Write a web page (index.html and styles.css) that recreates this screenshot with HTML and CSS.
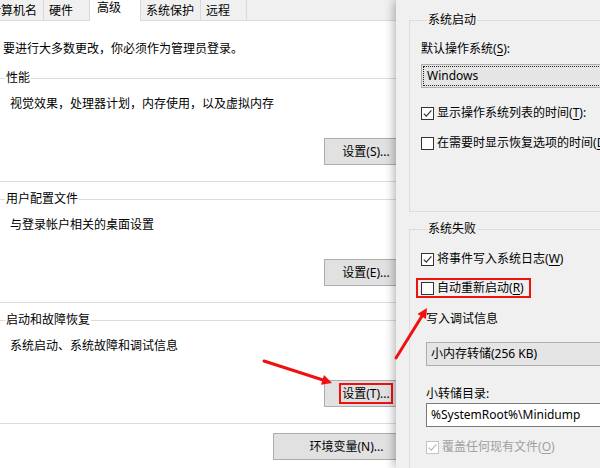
FILE: index.html
```html
<!DOCTYPE html>
<html lang="zh-CN">
<head>
  <meta charset="UTF-8">
  <title>系统属性 - 启动和故障恢复</title>
  <link rel="stylesheet" href="styles.css">
</head>
<body>
<div class="screen">

  <!-- 系统属性窗口（被右侧对话框遮住一部分） -->
  <div class="syswin">
    <div class="tabs">
      <div class="tab">计算机名</div>
      <div class="tab">硬件</div>
      <div class="tab active">高级</div>
      <div class="tab">系统保护</div>
      <div class="tab">远程</div>
    </div>
    <div class="sysbody">
      <p class="note">要进行大多数更改，你必须作为管理员登录。</p>

      <fieldset class="group">
        <legend>性能</legend>
        <p class="desc">视觉效果，处理器计划，内存使用，以及虚拟内存</p>
        <div class="actions"><button class="btn">设置(S)...</button></div>
      </fieldset>

      <fieldset class="group">
        <legend>用户配置文件</legend>
        <p class="desc">与登录帐户相关的桌面设置</p>
        <div class="actions"><button class="btn">设置(E)...</button></div>
      </fieldset>

      <fieldset class="group">
        <legend>启动和故障恢复</legend>
        <p class="desc">系统启动、系统故障和调试信息</p>
        <div class="actions"><button class="btn"><span class="mark">设置(T)...</span></button></div>
      </fieldset>

      <div class="actions env"><button class="btn wide">环境变量(N)...</button></div>
    </div>
  </div>

  <!-- 启动和故障恢复对话框 -->
  <div class="bootwin">
    <fieldset class="box-group first">
      <legend>系统启动</legend>
      <div class="label gap-13">默认操作系统<span class="key">(<u>S</u>)</span>:</div>
      <div class="select gap-7"><span class="focus">Windows</span></div>
      <label class="check gap-17">
        <span class="cb on"><svg viewBox="0 0 11 11"><path d="M1.8 5.6 L4.3 8.2 L9.4 2.4"/></svg></span>
        <span>显示操作系统列表的时间<span class="key">(<u>T</u>)</span>:</span>
      </label>
      <label class="check gap-14">
        <span class="cb"></span>
        <span>在需要时显示恢复选项的时间<span class="key">(<u>D</u>)</span>:</span>
      </label>
    </fieldset>

    <fieldset class="box-group second">
      <legend>系统失败</legend>
      <label class="check gap-14">
        <span class="cb on"><svg viewBox="0 0 11 11"><path d="M1.8 5.6 L4.3 8.2 L9.4 2.4"/></svg></span>
        <span>将事件写入系统日志<span class="key">(<u>W</u>)</span></span>
      </label>
      <label class="check gap-13 marked">
        <span class="cb"></span>
        <span>自动重新启动<span class="key">(<u>R</u>)</span></span>
      </label>

      <div class="sub">
        <div class="label gap-15">写入调试信息</div>
        <div class="select plain gap-15">小内存转储(256 KB)</div>
        <div class="label gap-20">小转储目录:</div>
        <div class="textbox gap-1">%SystemRoot%\Minidump</div>
        <label class="check disabled gap-12">
          <span class="cb on"><svg viewBox="0 0 11 11"><path d="M1.8 5.6 L4.3 8.2 L9.4 2.4"/></svg></span>
          <span>覆盖任何现有文件<span class="key">(<u>O</u>)</span></span>
        </label>
      </div>
    </fieldset>
  </div>

  <!-- 标注箭头 -->
  <svg class="arrows" viewBox="0 0 600 468">
    <line x1="264" y1="361" x2="323" y2="380"/>
    <polygon points="332,383 321,384.7 324,375.1"/>
    <line x1="396" y1="358" x2="421.7" y2="316.5"/>
    <polygon points="427,308 426,319.1 417.5,313.9"/>
  </svg>

</div>
</body>
</html>
```

FILE: styles.css
```css
* {
  box-sizing: border-box;
}

body {
  margin: 0;
  font-family: "Noto Sans", "Noto Sans CJK SC", sans-serif;
  font-size: 12px;
  line-height: 16px;
  color: #000;
  background: #fff;
  text-autospace: no-autospace;
}

.screen {
  position: relative;
  display: flex;
  width: 600px;
  height: 468px;
  overflow: hidden;
}

/* 左侧：系统属性 */
.syswin {
  flex: none;
  width: 396px;
  overflow: hidden;
  background: #fff;
}

.tabs {
  display: flex;
  align-items: flex-start;
  width: 430px;
  height: 21px;
  margin-left: -16px;
  background: #f0f0f0;
  border-bottom: 1px solid #d9d9d9;
}

.tab {
  flex: none;
  min-width: 46px;
  height: 20px;
  padding: 0 6px 0 5px;
  line-height: 22px;
  border-right: 1px solid #d9d9d9;
  white-space: nowrap;
}

.tab.active {
  position: relative;
  z-index: 1;
  min-width: 51px;
  height: 21px;
  padding: 0 8px 0 7px;
  line-height: 16px;
  background: #fff;
}

.sysbody {
  width: 420px;
  padding-top: 20px;
}

.note {
  margin: 0 0 13px 3px;
}

.group {
  min-width: 0;
  width: 424px;
  margin: 0 0 9px -4px;
  padding: 0 11px 16px 0;
  border: 1px solid #dcdcdc;
}

.group legend {
  margin-left: 8px;
  padding: 0 1px;
}

.desc {
  margin: 10px 0 0 13px;
}

.actions {
  display: flex;
  justify-content: flex-end;
  margin-top: 26px;
}

.actions.env {
  margin-top: 7px;
}

.btn {
  width: 84px;
  height: 27px;
  padding: 0;
  font: inherit;
  color: #000;
  background: #e1e1e1;
  border: 1px solid #adadad;
}

.btn.wide {
  width: 147px;
}

.mark {
  display: inline-block;
  padding: 0 1px;
  line-height: 17px;
  outline: 2px solid #f01010;
}

/* 右侧：启动和故障恢复 */
.bootwin {
  position: relative;
  z-index: 2;
  flex: 1;
  overflow: hidden;
  padding: 12px 0 0 13px;
  background: #f0f0f0;
  box-shadow: -2px 0 9px rgba(0, 0, 0, 0.3);
}

.box-group {
  min-width: 0;
  width: 260px;
  margin: 0;
  padding: 0 0 60px 11px;
  border: 1px solid #dcdcdc;
}

.box-group.second {
  margin-top: 9px;
  padding-bottom: 40px;
}

.box-group legend {
  margin-left: 6px;
  padding: 0 1px;
}

.label,
.check {
  white-space: nowrap;
}

.key {
  font-family: "Noto Sans", sans-serif;
}

.key u {
  text-underline-offset: 2px;
}

.select {
  width: 240px;
  height: 24px;
  background: #e5e5e5;
  border: 1px solid #adadad;
}

.select .focus {
  display: block;
  height: 20px;
  margin: 1px;
  padding-left: 3px;
  line-height: 18px;
  border: 1px dotted #222;
}

.select.plain {
  padding-left: 4px;
  line-height: 22px;
}

.textbox {
  width: 240px;
  height: 24px;
  padding-left: 4px;
  line-height: 22px;
  background: #fff;
  border: 1px solid #7a7a7a;
  white-space: nowrap;
}

.check {
  display: flex;
  align-items: center;
  gap: 3px;
  height: 16px;
}

.cb {
  flex: none;
  width: 13px;
  height: 13px;
  background: #fff;
  border: 1px solid #333;
}

.cb svg {
  display: block;
  width: 11px;
  height: 11px;
}

.cb path {
  fill: none;
  stroke: #333;
  stroke-width: 1.2;
}

.check.marked {
  width: max-content;
  margin-left: -3px;
  margin-right: -5px;
  padding: 0 5px 0 3px;
  outline: 2px solid #f01010;
}

.check.disabled {
  color: #a0a0a0;
}

.check.disabled .cb {
  border-color: #c4c4c4;
}

.check.disabled path {
  stroke: #b8b8b8;
}

.sub {
  margin-left: 5px;
}

.gap-1 { margin-top: 1px; }
.gap-7 { margin-top: 7px; }
.gap-12 { margin-top: 12px; }
.gap-13 { margin-top: 13px; }
.gap-14 { margin-top: 14px; }
.gap-15 { margin-top: 15px; }
.gap-17 { margin-top: 17px; }
.gap-20 { margin-top: 20px; }

/* 标注箭头 */
.arrows {
  position: absolute;
  top: 0;
  left: 0;
  z-index: 3;
  width: 600px;
  height: 468px;
  pointer-events: none;
}

.arrows line {
  stroke: #f01010;
  stroke-width: 3;
  stroke-linecap: round;
}

.arrows polygon {
  fill: #f01010;
}
```
